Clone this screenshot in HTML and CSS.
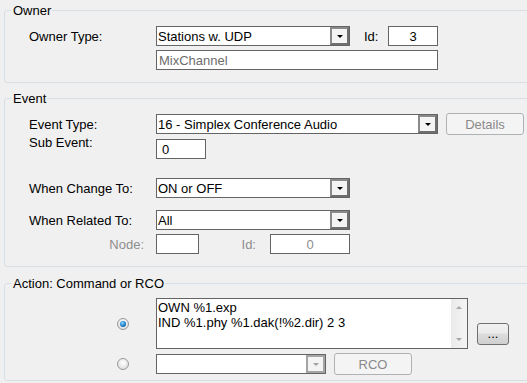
FILE: index.html
```html
<!DOCTYPE html>
<html lang="en">
<head>
    <meta charset="UTF-8">
    <title>Event Action</title>
    <link rel="stylesheet" href="styles.css">
</head>
<body>
    <fieldset class="group group-owner">
        <legend>Owner</legend>
        <div class="row">
            <label class="caption">Owner Type:</label>
            <div class="combo w194">
                <span class="combo-text">Stations w. UDP</span>
                <span class="combo-btn"><i class="arrow"></i></span>
            </div>
            <label class="small-caption">Id:</label>
            <input class="textbox w50 center" type="text" value="3" readonly>
        </div>
        <div class="row gap4">
            <span class="caption"></span>
            <input class="textbox w282 disabled" type="text" value="MixChannel" readonly>
        </div>
    </fieldset>

    <fieldset class="group group-event">
        <legend>Event</legend>
        <div class="row tall">
            <label class="caption">Event Type:</label>
            <div class="combo w282">
                <span class="combo-text">16 - Simplex Conference Audio</span>
                <span class="combo-btn"><i class="arrow"></i></span>
            </div>
            <button class="btn disabled-btn details">Details</button>
        </div>
        <div class="row gap4">
            <label class="caption raised">Sub Event:</label>
            <input class="textbox w50 pad" type="text" value="0" readonly>
        </div>
        <div class="row gap19">
            <label class="caption">When Change To:</label>
            <div class="combo w194">
                <span class="combo-text">ON or OFF</span>
                <span class="combo-btn"><i class="arrow"></i></span>
            </div>
        </div>
        <div class="row gap12">
            <label class="caption">When Related To:</label>
            <div class="combo w194">
                <span class="combo-text">All</span>
                <span class="combo-btn"><i class="arrow"></i></span>
            </div>
        </div>
        <div class="row gap4">
            <label class="caption right grey">Node:</label>
            <input class="textbox w43" type="text" value="" readonly>
            <label class="id-caption grey">Id:</label>
            <input class="textbox w80 center grey" type="text" value="0" readonly>
        </div>
    </fieldset>

    <fieldset class="group group-action">
        <legend>Action: Command or RCO</legend>
        <div class="row action-row">
            <span class="caption radio-cell"><span class="radio checked"></span></span>
            <div class="memo">
                <div class="memo-text">OWN %1.exp<br>IND %1.phy %1.dak(!%2.dir) 2 3</div>
                <div class="scrollbar">
                    <i class="sb-up"></i>
                    <i class="sb-down"></i>
                </div>
            </div>
            <button class="btn dots">...</button>
        </div>
        <div class="row tall gap4">
            <span class="caption radio-cell"><span class="radio"></span></span>
            <div class="combo w170 combo-disabled">
                <span class="combo-text"></span>
                <span class="combo-btn"><i class="arrow"></i></span>
            </div>
            <button class="btn disabled-btn rco">RCO</button>
        </div>
    </fieldset>
</body>
</html>
```

FILE: styles.css
```css
html, body {
    margin: 0;
    padding: 0;
    background-color: #f0f0f0;
    overflow: hidden;
}
body {
    font-family: 'Liberation Sans', Arial, sans-serif;
    font-size: 13px;
    line-height: 15px;
    color: #000;
    width: 527px;
    height: 383px;
}
.group {
    border: 1px solid #d5dfe5;
    border-radius: 3px;
    margin: 0 -20px 0 4px;
    padding: 0 0 12px 24px;
    min-width: 0;
}
.group legend {
    padding: 0 1px 0 2px;
    margin-left: -18px;
    line-height: 15px;
}
.group-owner {
    margin-top: 3px;
    padding-top: 8px;
}
.group-event {
    margin-top: 8px;
    padding-top: 7px;
}
.group-action {
    margin-top: 9px;
    padding-top: 7px;
    padding-bottom: 5px;
}
.row {
    display: flex;
    align-items: center;
    height: 20px;
}
.row.tall {
    height: 22px;
}
.gap4 { margin-top: 4px; }
.gap12 { margin-top: 12px; }
.gap19 { margin-top: 19px; }
.caption {
    width: 127px;
    flex: none;
    white-space: nowrap;
}
.caption.raised {
    align-self: flex-start;
    margin-top: -4px;
}
.caption.right {
    text-align: right;
    padding-right: 12px;
    box-sizing: border-box;
}
.grey {
    color: #8d8d8d;
}
.small-caption {
    width: 24px;
    margin-left: 14px;
}
.id-caption {
    width: 71px;
    text-align: right;
    padding-right: 14px;
    box-sizing: border-box;
}
.w43 { width: 43px; }
.w50 { width: 50px; }
.w80 { width: 80px; }
.w170 { width: 170px; }
.w194 { width: 194px; }
.w282 { width: 282px; }

.textbox {
    box-sizing: border-box;
    height: 20px;
    margin: 0;
    border: 1px solid #646464;
    background-color: #fff;
    font-family: inherit;
    font-size: 13px;
    color: #000;
    padding: 0 2px;
    outline: none;
}
.textbox.center {
    text-align: center;
}
.textbox.pad {
    padding-left: 5px;
}
.textbox.disabled {
    color: #6d6d6d;
}
.textbox.grey {
    color: #8d8d8d;
}

.combo {
    box-sizing: border-box;
    height: 20px;
    border: 1px solid #646464;
    background-color: #fff;
    display: flex;
    align-items: center;
}
.combo-text {
    flex: 1;
    padding-left: 1px;
    white-space: nowrap;
    overflow: hidden;
}
.combo-btn {
    box-sizing: border-box;
    width: 19px;
    height: 18px;
    border: 2px solid #8a8a8a;
    border-right-color: #6e6e6e;
    border-bottom-color: #6e6e6e;
    background-color: #f4f4f4;
    display: flex;
    align-items: center;
    justify-content: center;
}
.arrow {
    width: 0;
    height: 0;
    border-left: 3px solid transparent;
    border-right: 3px solid transparent;
    border-top: 3px solid #000;
    margin-top: 1px;
}
.combo-disabled .combo-btn {
    border-color: #a5a5a5;
}
.combo-disabled .arrow {
    border-top-color: #a0a0a0;
}

.btn {
    box-sizing: border-box;
    height: 22px;
    font-family: inherit;
    font-size: 13px;
    border-radius: 3px;
    padding: 0;
    margin: 0;
}
.disabled-btn {
    width: 78px;
    margin-left: 8px;
    border: 1px solid #adb2b5;
    background-color: #f4f4f4;
    color: #8a8a8a;
}
.details {
    margin-left: 8px;
}
.rco {
    margin-left: 8px;
}
.dots {
    width: 32px;
    margin-left: 9px;
    align-self: flex-end;
    margin-bottom: 4px;
    border: 1px solid #707070;
    background: linear-gradient(#f2f2f2 0%, #ebebeb 45%, #dddddd 50%, #cfcfcf 100%);
    color: #000;
    line-height: 10px;
}

.action-row {
    height: 51px;
}
.radio-cell {
    display: flex;
    justify-content: flex-end;
    padding-right: 27px;
    box-sizing: border-box;
}
.radio {
    box-sizing: border-box;
    width: 12px;
    height: 12px;
    border-radius: 50%;
    border: 1px solid #9a9a9a;
    background: radial-gradient(circle at 50% 40%, #ffffff 0%, #e8e8e8 55%, #cfcfcf 100%);
    display: flex;
    align-items: center;
    justify-content: center;
}
.radio.checked::after {
    content: '';
    width: 6px;
    height: 6px;
    border-radius: 50%;
    background: radial-gradient(circle at 40% 35%, #8fd3ff 0%, #1f86d0 50%, #0b4274 100%);
}

.memo {
    box-sizing: border-box;
    width: 312px;
    height: 51px;
    border: 1px solid #646464;
    background-color: #fff;
    display: flex;
}
.memo-text {
    flex: 1;
    padding: 1px 0 0 1px;
    white-space: nowrap;
    overflow: hidden;
}
.scrollbar {
    width: 16px;
    background: linear-gradient(90deg, #eaeaea, #f4f4f4);
    position: relative;
}
.sb-up, .sb-down {
    position: absolute;
    left: 5px;
    width: 0;
    height: 0;
    border-left: 3px solid transparent;
    border-right: 3px solid transparent;
}
.sb-up {
    top: 7px;
    border-bottom: 3px solid #a8a8a8;
}
.sb-down {
    bottom: 7px;
    border-top: 3px solid #a8a8a8;
}
```
